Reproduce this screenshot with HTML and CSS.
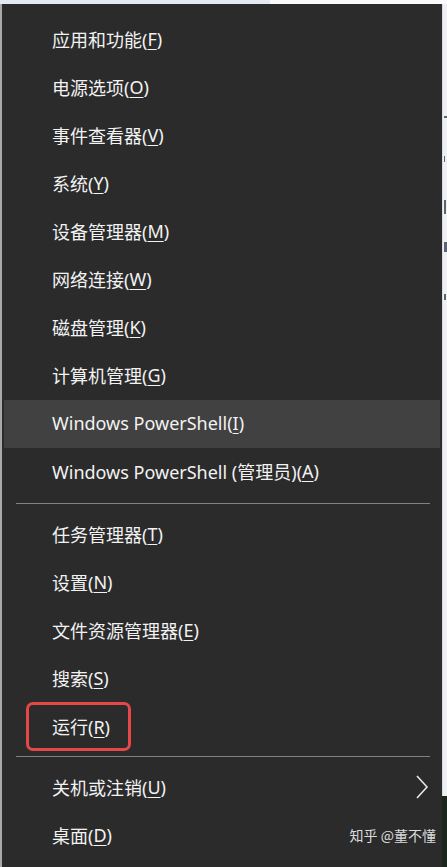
FILE: index.html
```html
<!DOCTYPE html>
<html lang="zh-CN">
<head>
<meta charset="utf-8">
<link rel="stylesheet" href="styles.css">
</head>
<body>
<div class="screen">
  <div class="topstrip"><div class="top-left"></div><div class="top-right"></div></div>
  <div class="main">
    <div class="leftedge"></div>
    <div class="menu">
      <div class="item">应用和功能(<u>F</u>)</div>
      <div class="item">电源选项(<u>O</u>)</div>
      <div class="item">事件查看器(<u>V</u>)</div>
      <div class="item">系统(<u>Y</u>)</div>
      <div class="item">设备管理器(<u>M</u>)</div>
      <div class="item">网络连接(<u>W</u>)</div>
      <div class="item">磁盘管理(<u>K</u>)</div>
      <div class="item">计算机管理(<u>G</u>)</div>
      <div class="item hover">Windows PowerShell(<u>I</u>)</div>
      <div class="item">Windows PowerShell (管理员)(<u>A</u>)</div>
      <div class="sep sep1"></div>
      <div class="item">任务管理器(<u>T</u>)</div>
      <div class="item">设置(<u>N</u>)</div>
      <div class="item">文件资源管理器(<u>E</u>)</div>
      <div class="item">搜索(<u>S</u>)</div>
      <div class="item"><span class="marked">运行(<u>R</u>)</span></div>
      <div class="sep sep2"></div>
      <div class="item sub">关机或注销(<u>U</u>)
        <svg class="chev" width="14" height="24" viewBox="0 0 14 24"><path d="M2 1 L12 12 L2 23" fill="none" stroke="#e8e8e8" stroke-width="1.6"/></svg>
      </div>
      <div class="item last">桌面(<u>D</u>)<span class="wm">知乎 @董不懂</span></div>
    </div>
    <div class="rightedge">
      <div class="re-light">
        <i class="frag f1"></i><i class="frag f2"></i><i class="frag f3"></i><i class="frag f4"></i><i class="frag f5"></i>
      </div>
      <div class="re-dark"></div>
    </div>
  </div>
</div>
</body>
</html>
```
FILE: styles.css
```css
* { box-sizing: border-box; }
html, body { margin: 0; padding: 0; }
body {
  width: 447px;
  height: 867px;
  overflow: hidden;
  background: #f3f3f3;
  font-family: "Noto Sans", "Noto Sans CJK SC", sans-serif;
}
.screen { display: flex; flex-direction: column; height: 867px; }
.topstrip { display: flex; height: 4px; flex: none; }
.top-left { width: 270px; background: #e4e9f2; }
.top-right { flex: 1; background: #fafafa; }
.main { display: flex; flex: 1; min-height: 0; }
.leftedge { width: 2px; background: #a9a9a9; flex: none; }
.menu {
  width: 440px;
  flex: none;
  background: #2b2b2b;
  padding-top: 12px;
  color: #f2f2f2;
  display: flex;
  flex-direction: column;
}
.item {
  height: 48px;
  display: flex;
  align-items: center;
  padding-left: 48px;
  padding-bottom: 2px;
  margin: 0 2px;
  font-size: 18px;
  white-space: nowrap;
  position: relative;
  flex: none;
}
.item u { text-decoration-thickness: 1px; text-underline-offset: 3px; }
.hover { background: #414141; }
.sep { height: 1px; background: #808080; margin-left: 14px; margin-right: 12px; flex: none; }
.sep1 { margin-top: 7px; margin-bottom: 7px; }
.sep2 { margin-top: 5px; margin-bottom: 7px; }
.marked { position: relative; }
.marked::before {
  content: "";
  position: absolute;
  left: -26px;
  right: -21px;
  top: -11px;
  bottom: -12px;
  border: 3px solid #e64848;
  border-radius: 7px;
}
.sub .chev { position: absolute; right: 11px; top: 11px; }
.wm {
  position: absolute;
  right: 4px;
  top: 13px;
  font-size: 14px;
  color: #dcdcdc;
  font-family: "Noto Sans CJK SC", sans-serif;
}
.rightedge { flex: 1; display: flex; flex-direction: column; }
.re-light {
  height: 792px;
  background: #eef0f3;
  border-left: 1px solid #d8dbe2;
  position: relative;
  overflow: hidden;
}
.frag { position: absolute; left: 1px; width: 3px; background: #5a6473; }
.f1 { top: 112px; height: 2px; }
.f2 { top: 152px; height: 6px; width: 1px; }
.f3 { top: 196px; height: 14px; width: 2px; }
.f4 { top: 238px; height: 10px; }
.f5 { top: 290px; height: 6px; width: 2px; }
.re-dark { flex: 1; background: #1c261c; }
```
